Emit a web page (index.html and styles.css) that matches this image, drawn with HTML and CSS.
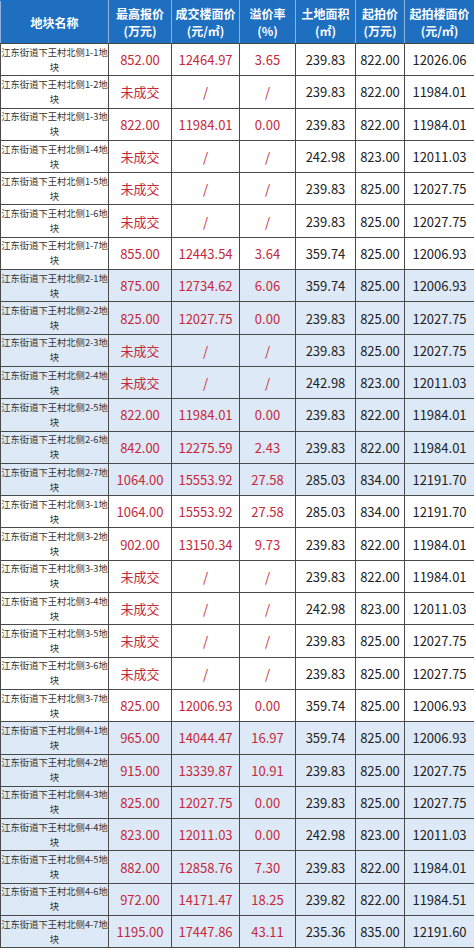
FILE: index.html
```html
<!DOCTYPE html>
<html lang="zh">
<head>
<meta charset="utf-8">
<link rel="stylesheet" href="styles.css">
</head>
<body>
<table class="grid">
<colgroup>
<col class="c1"><col class="c2"><col class="c3"><col class="c4"><col class="c5"><col class="c6"><col class="c7">
</colgroup>
<thead>
<tr class="head">
<th>地块名称</th>
<th>最高报价<br>(万元)</th>
<th>成交楼面价<br>(元/㎡)</th>
<th>溢价率<br>(%)</th>
<th>土地面积<br>(㎡)</th>
<th>起拍价<br>(万元)</th>
<th>起拍楼面价<br>(元/㎡)</th>
</tr>
</thead>
<tbody>
<tr><td class="name">江东街道下王村北侧1-1地块</td><td class="red">852.00</td><td class="red">12464.97</td><td class="red">3.65</td><td>239.83</td><td>822.00</td><td>12026.06</td></tr>
<tr><td class="name">江东街道下王村北侧1-2地块</td><td class="red">未成交</td><td class="red">/</td><td class="red">/</td><td>239.83</td><td>822.00</td><td>11984.01</td></tr>
<tr><td class="name">江东街道下王村北侧1-3地块</td><td class="red">822.00</td><td class="red">11984.01</td><td class="red">0.00</td><td>239.83</td><td>822.00</td><td>11984.01</td></tr>
<tr><td class="name">江东街道下王村北侧1-4地块</td><td class="red">未成交</td><td class="red">/</td><td class="red">/</td><td>242.98</td><td>823.00</td><td>12011.03</td></tr>
<tr><td class="name">江东街道下王村北侧1-5地块</td><td class="red">未成交</td><td class="red">/</td><td class="red">/</td><td>239.83</td><td>825.00</td><td>12027.75</td></tr>
<tr><td class="name">江东街道下王村北侧1-6地块</td><td class="red">未成交</td><td class="red">/</td><td class="red">/</td><td>239.83</td><td>825.00</td><td>12027.75</td></tr>
<tr><td class="name">江东街道下王村北侧1-7地块</td><td class="red">855.00</td><td class="red">12443.54</td><td class="red">3.64</td><td>359.74</td><td>825.00</td><td>12006.93</td></tr>
<tr class="alt"><td class="name">江东街道下王村北侧2-1地块</td><td class="red">875.00</td><td class="red">12734.62</td><td class="red">6.06</td><td>359.74</td><td>825.00</td><td>12006.93</td></tr>
<tr class="alt"><td class="name">江东街道下王村北侧2-2地块</td><td class="red">825.00</td><td class="red">12027.75</td><td class="red">0.00</td><td>239.83</td><td>825.00</td><td>12027.75</td></tr>
<tr class="alt"><td class="name">江东街道下王村北侧2-3地块</td><td class="red">未成交</td><td class="red">/</td><td class="red">/</td><td>239.83</td><td>825.00</td><td>12027.75</td></tr>
<tr class="alt"><td class="name">江东街道下王村北侧2-4地块</td><td class="red">未成交</td><td class="red">/</td><td class="red">/</td><td>242.98</td><td>823.00</td><td>12011.03</td></tr>
<tr class="alt"><td class="name">江东街道下王村北侧2-5地块</td><td class="red">822.00</td><td class="red">11984.01</td><td class="red">0.00</td><td>239.83</td><td>822.00</td><td>11984.01</td></tr>
<tr class="alt"><td class="name">江东街道下王村北侧2-6地块</td><td class="red">842.00</td><td class="red">12275.59</td><td class="red">2.43</td><td>239.83</td><td>822.00</td><td>11984.01</td></tr>
<tr class="alt"><td class="name">江东街道下王村北侧2-7地块</td><td class="red">1064.00</td><td class="red">15553.92</td><td class="red">27.58</td><td>285.03</td><td>834.00</td><td>12191.70</td></tr>
<tr><td class="name">江东街道下王村北侧3-1地块</td><td class="red">1064.00</td><td class="red">15553.92</td><td class="red">27.58</td><td>285.03</td><td>834.00</td><td>12191.70</td></tr>
<tr><td class="name">江东街道下王村北侧3-2地块</td><td class="red">902.00</td><td class="red">13150.34</td><td class="red">9.73</td><td>239.83</td><td>822.00</td><td>11984.01</td></tr>
<tr><td class="name">江东街道下王村北侧3-3地块</td><td class="red">未成交</td><td class="red">/</td><td class="red">/</td><td>239.83</td><td>822.00</td><td>11984.01</td></tr>
<tr><td class="name">江东街道下王村北侧3-4地块</td><td class="red">未成交</td><td class="red">/</td><td class="red">/</td><td>242.98</td><td>823.00</td><td>12011.03</td></tr>
<tr><td class="name">江东街道下王村北侧3-5地块</td><td class="red">未成交</td><td class="red">/</td><td class="red">/</td><td>239.83</td><td>825.00</td><td>12027.75</td></tr>
<tr><td class="name">江东街道下王村北侧3-6地块</td><td class="red">未成交</td><td class="red">/</td><td class="red">/</td><td>239.83</td><td>825.00</td><td>12027.75</td></tr>
<tr><td class="name">江东街道下王村北侧3-7地块</td><td class="red">825.00</td><td class="red">12006.93</td><td class="red">0.00</td><td>359.74</td><td>825.00</td><td>12006.93</td></tr>
<tr class="alt"><td class="name">江东街道下王村北侧4-1地块</td><td class="red">965.00</td><td class="red">14044.47</td><td class="red">16.97</td><td>359.74</td><td>825.00</td><td>12006.93</td></tr>
<tr class="alt"><td class="name">江东街道下王村北侧4-2地块</td><td class="red">915.00</td><td class="red">13339.87</td><td class="red">10.91</td><td>239.83</td><td>825.00</td><td>12027.75</td></tr>
<tr class="alt"><td class="name">江东街道下王村北侧4-3地块</td><td class="red">825.00</td><td class="red">12027.75</td><td class="red">0.00</td><td>239.83</td><td>825.00</td><td>12027.75</td></tr>
<tr class="alt"><td class="name">江东街道下王村北侧4-4地块</td><td class="red">823.00</td><td class="red">12011.03</td><td class="red">0.00</td><td>242.98</td><td>823.00</td><td>12011.03</td></tr>
<tr class="alt"><td class="name">江东街道下王村北侧4-5地块</td><td class="red">882.00</td><td class="red">12858.76</td><td class="red">7.30</td><td>239.83</td><td>822.00</td><td>11984.01</td></tr>
<tr class="alt"><td class="name">江东街道下王村北侧4-6地块</td><td class="red">972.00</td><td class="red">14171.47</td><td class="red">18.25</td><td>239.82</td><td>822.00</td><td>11984.51</td></tr>
<tr class="alt"><td class="name">江东街道下王村北侧4-7地块</td><td class="red">1195.00</td><td class="red">17447.86</td><td class="red">43.11</td><td>235.36</td><td>835.00</td><td>12191.60</td></tr>
</tbody>
</table>
</body>
</html>
```
FILE: styles.css
```css
html, body {
  margin: 0;
  padding: 0;
  background: #ffffff;
}
body {
  font-family: "Noto Sans CJK SC", "Noto Sans", sans-serif;
  color: #222;
}
.grid {
  width: 474px;
  table-layout: fixed;
  border-collapse: collapse;
}
.c1 { width: 108px; }
.c2 { width: 63px; }
.c3 { width: 68px; }
.c4 { width: 56px; }
.c5 { width: 60px; }
.c6 { width: 49px; }
.c7 { width: 70px; }
.head {
  height: 43px;
}
.head th {
  background: #1f6fc0;
  color: #ffffff;
  font-size: 12px;
  font-weight: bold;
  line-height: 17px;
  padding: 0;
  border: 1px solid #8fb4de;
  border-bottom-color: #444;
  border-top-color: #1f6fc0;
  text-align: center;
  white-space: nowrap;
}
tbody tr {
  height: 32.3px;
  background: #ffffff;
}
tbody tr.alt {
  background: #dde9f6;
}
tbody td {
  border: 1px solid #4a4a4a;
  padding: 0;
  text-align: center;
  font-size: 13px;
  color: #222;
}
tbody td.name {
  font-size: 9.3px;
  line-height: 15px;
  padding: 0;
  color: #333;
}
tbody td.red {
  color: #c4283a;
}
```
